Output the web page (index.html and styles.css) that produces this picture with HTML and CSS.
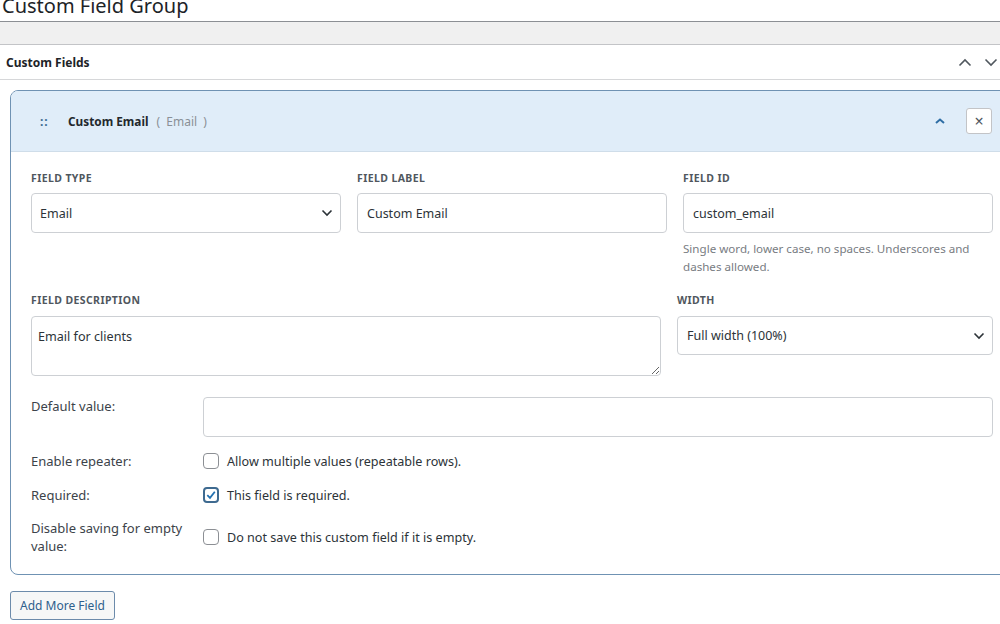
FILE: index.html
```html
<!DOCTYPE html>
<html lang="en">
<head>
<meta charset="utf-8">
<title>Custom Field Group</title>
<link rel="stylesheet" href="styles.css">
</head>
<body>
<div class="page">
  <h1 class="title">Custom Field Group</h1>
  <div class="band"></div>
  <div class="section-head">
    <span class="section-title">Custom Fields</span>
    <span class="section-arrows">
      <svg width="14" height="9" viewBox="0 0 14 9"><path d="M1.5 7.5 L7 2 L12.5 7.5" fill="none" stroke="#50575e" stroke-width="1.6"/></svg>
      <svg width="14" height="9" viewBox="0 0 14 9"><path d="M1.5 1.5 L7 7 L12.5 1.5" fill="none" stroke="#50575e" stroke-width="1.6"/></svg>
    </span>
  </div>
  <div class="section-body">
    <div class="field-box">
      <div class="field-head">
        <span class="handle">::</span>
        <span class="field-name">Custom Email</span>
        <span class="field-type">(&nbsp;&nbsp;Email&nbsp;&nbsp;)</span>
        <span class="head-spacer"></span>
        <svg class="collapse" width="12" height="8" viewBox="0 0 12 8"><path d="M2 6 L6 2.5 L10 6" fill="none" stroke="#2f6ea5" stroke-width="2"/></svg>
        <span class="close-btn">×</span>
      </div>
      <div class="field-body">
        <div class="row-three">
          <div class="col">
            <div class="label">Field Type</div>
            <div class="select"><span>Email</span><svg width="12" height="8" viewBox="0 0 12 8"><path d="M1.5 1.5 L6 6 L10.5 1.5" fill="none" stroke="#2c3338" stroke-width="1.6"/></svg></div>
          </div>
          <div class="col">
            <div class="label">Field Label</div>
            <div class="input">Custom Email</div>
          </div>
          <div class="col">
            <div class="label">Field ID</div>
            <div class="input">custom_email</div>
            <p class="help">Single word, lower case, no spaces. Underscores and dashes allowed.</p>
          </div>
        </div>
        <div class="row-two">
          <div class="col">
            <div class="label">Field Description</div>
            <textarea class="textarea">Email for clients</textarea>
          </div>
          <div class="col">
            <div class="label">Width</div>
            <div class="select select-width"><span>Full width (100%)</span><svg width="12" height="8" viewBox="0 0 12 8"><path d="M1.5 1.5 L6 6 L10.5 1.5" fill="none" stroke="#2c3338" stroke-width="1.6"/></svg></div>
          </div>
        </div>
        <div class="options">
          <div class="opt opt-input">
            <div class="opt-label">Default value:</div>
            <div class="input input-default"></div>
          </div>
          <div class="opt">
            <div class="opt-label">Enable repeater:</div>
            <div class="check"><span class="box"></span><span>Allow multiple values (repeatable rows).</span></div>
          </div>
          <div class="opt">
            <div class="opt-label">Required:</div>
            <div class="check"><span class="box box-on"><svg width="12" height="12" viewBox="0 0 12 12"><path d="M2.3 6.2 L5 8.8 L9.8 2.8" fill="none" stroke="#2271b1" stroke-width="1.8"/></svg></span><span>This field is required.</span></div>
          </div>
          <div class="opt">
            <div class="opt-label">Disable saving for empty value:</div>
            <div class="check"><span class="box"></span><span>Do not save this custom field if it is empty.</span></div>
          </div>
        </div>
      </div>
    </div>
    <button class="add-btn" type="button">Add More Field</button>
  </div>
</div>
</body>
</html>
```

FILE: styles.css
```css
* { box-sizing: border-box; }
html, body { margin: 0; padding: 0; overflow: hidden; background: #fff; }
body {
  font-family: "Noto Sans", "Open Sans", sans-serif;
  font-size: 13px;
  color: #2c3338;
  width: 1000px;
  height: 624px;
}
.page { width: 1000px; }
.title {
  margin: -5px 0 0 0;
  padding: 0 0 4px 2px;
  font-size: 20px;
  font-weight: 400;
  line-height: 22px;
  color: #1d2327;
  border-bottom: 1px solid #8c8f94;
}
.band {
  height: 23px;
  background: #f0f0f0;
  border-bottom: 1px solid #c3c4c7;
}
.section-head {
  height: 35px;
  display: flex;
  align-items: center;
  justify-content: space-between;
  padding: 0 2px 0 6px;
  border-bottom: 1px solid #d6d7d9;
}
.section-title { font-weight: 700; font-size: 12px; color: #1d2327; }
.section-arrows { display: flex; gap: 12px; align-items: center; }
.section-body { padding: 10px 0 0 10px; }
.field-box {
  width: 1004px;
  border: 1px solid #6f92b3;
  border-radius: 8px;
  overflow: hidden;
}
.field-head {
  height: 61px;
  background: #e0edf9;
  border-bottom: 1px solid #cfdde9;
  display: flex;
  align-items: center;
  padding: 0 21px 0 29px;
}
.handle { color: #3d6c93; font-weight: 700; font-size: 12px; letter-spacing: 1px; width: 28px; }
.field-name { font-weight: 700; font-size: 11.8px; color: #23282d; }
.field-type { color: #8a9096; font-size: 12px; margin-left: 8px; }
.head-spacer { flex: 1; }
.collapse { margin-right: 20px; }
.close-btn {
  width: 26px; height: 26px;
  border: 1px solid #c3c4c7;
  border-radius: 3px;
  background: #fff;
  display: flex; align-items: center; justify-content: center;
  color: #50575e;
  font-size: 16px;
  line-height: 1;
}
.field-body { padding: 19px 20px 19px 20px; }
.row-three {
  display: grid;
  grid-template-columns: 1fr 1fr 1fr;
  gap: 16px;
}
.row-two {
  display: grid;
  grid-template-columns: 1fr 316px;
  gap: 16px;
  margin-top: 17px;
}
.label {
  font-size: 10.5px;
  font-weight: 700;
  text-transform: uppercase;
  letter-spacing: 0.4px;
  color: #50575e;
  line-height: 14px;
  margin-bottom: 8px;
}
.row-two .label { margin-bottom: 9px; }
.input, .select {
  height: 40px;
  border: 1px solid #cdd0d4;
  border-radius: 4px;
  background: #fff;
  display: flex;
  align-items: center;
  padding: 0 9px;
  color: #2c3338;
  font-size: 12.5px;
}
.select { justify-content: space-between; padding: 0 7px 0 8px; }
.select-width { height: 39px; padding-left: 9px; }
.help {
  margin: 7px 0 0 0;
  font-size: 11.6px;
  line-height: 18px;
  color: #787c82;
}
.textarea {
  display: block;
  width: 100%;
  height: 60px;
  border: 1px solid #cdd0d4;
  border-radius: 4px;
  padding: 11px 6px;
  font-family: inherit;
  font-size: 12.6px;
  color: #2c3338;
  resize: both;
  line-height: 18px;
}
.options {
  margin-top: 21px;
  display: flex;
  flex-direction: column;
  gap: 14px;
}
.opt { display: flex; align-items: center; min-height: 20px; }
.opt-input { align-items: flex-start; }
.opt-label {
  width: 172px;
  flex: none;
  color: #3c434a;
  font-size: 13px;
  line-height: 18px;
  padding-right: 8px;
}
.input-default { flex: 1; }
.check { display: flex; align-items: center; gap: 8px; color: #2c3338; font-size: 12.6px; }
.box {
  width: 16px; height: 16px;
  border: 1px solid #8c8f94;
  border-radius: 4px;
  background: #fff;
  display: flex; align-items: center; justify-content: center;
  flex: none;
}
.box-on { border: 2px solid #3e6a90; }
.add-btn {
  margin-top: 16px;
  height: 29px;
  padding: 0 9px;
  border: 1px solid #6c8bab;
  border-radius: 3px;
  background: #f6f7f7;
  color: #2f5f8c;
  font-family: inherit;
  font-size: 12px;
}
```
